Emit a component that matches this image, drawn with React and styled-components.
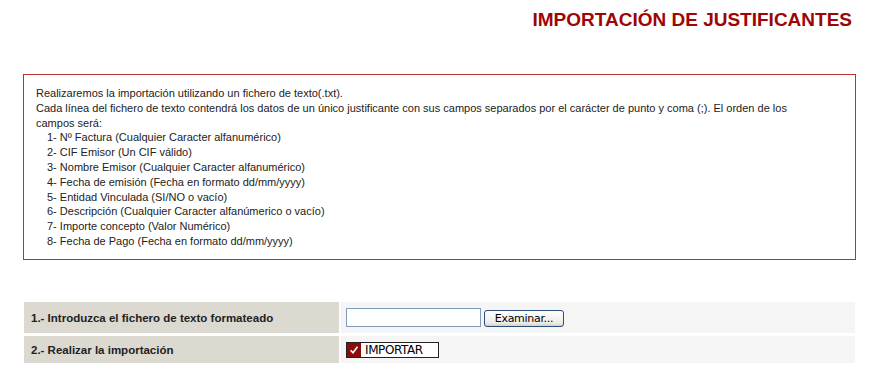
import styled, { createGlobalStyle } from "styled-components";

const GlobalStyle = createGlobalStyle`
  body {
    margin: 0;
    background: #ffffff;
    font-family: "Liberation Sans", Arial, sans-serif;
    color: #222222;
  }
`;

const Page = styled.div`
  width: 870px;
`;

const Title = styled.h1`
  margin: 0;
  padding: 9px 18px 0 0;
  text-align: right;
  font-size: 19px;
  line-height: 22px;
  font-weight: bold;
  color: #9e0505;
`;

const InfoBox = styled.div`
  box-sizing: border-box;
  height: 186px;
  margin: 43px 14px 0 23px;
  padding: 11px 12px 10px 12px;
  border: 1px solid #b83232;
  font-size: 11px;
  line-height: 14.8px;
  color: #222222;
`;

const Line = styled.div`
  max-width: 786px;
  padding-left: ${(p) => (p.$item ? "11px" : "0")};
`;

const Form = styled.div`
  margin: 42px 15px 0 24px;
  display: grid;
  grid-template-columns: 315px 1fr;
  row-gap: 3px;
  column-gap: 2px;
`;

const Label = styled.div`
  background: #dcd9d1;
  height: ${(p) => p.$h}px;
  display: flex;
  align-items: center;
  padding-left: 7px;
  font-size: 11.5px;
  font-weight: bold;
  color: #222222;
`;

const Value = styled.div`
  background: #f5f5f5;
  height: ${(p) => p.$h}px;
  display: flex;
  align-items: center;
  padding-left: 5px;
  gap: 3px;
`;

const FileInput = styled.div`
  width: 133px;
  height: 17px;
  border: 1px solid #7f9db9;
  background: #ffffff;
`;

const BrowseButton = styled.button`
  all: unset;
  box-sizing: border-box;
  width: 80px;
  height: 17px;
  margin-top: 2px;
  border: 1px solid #2c4e7a;
  border-radius: 3px;
  background: linear-gradient(#ffffff, #ecebe6 80%, #d6d0c5);
  font-family: Tahoma, "DejaVu Sans", sans-serif;
  font-size: 11px;
  letter-spacing: -0.3px;
  text-align: center;
  line-height: 15px;
  color: #000000;
`;

const ImportButton = styled.button`
  all: unset;
  box-sizing: border-box;
  display: flex;
  align-items: center;
  width: 93px;
  height: 16px;
  border: 1px solid #222222;
  background: #ffffff;
  font-family: "DejaVu Sans", Verdana, sans-serif;
  font-size: 12px;
  letter-spacing: -0.4px;
  color: #000000;
`;

const CheckBox = styled.span`
  display: flex;
  align-items: center;
  justify-content: center;
  width: 14px;
  height: 14px;
  margin-right: 4px;
  background: #8b0a0a;
`;

const items = [
  "1- Nº Factura (Cualquier Caracter alfanumérico)",
  "2- CIF Emisor (Un CIF válido)",
  "3- Nombre Emisor (Cualquier Caracter alfanumérico)",
  "4- Fecha de emisión (Fecha en formato dd/mm/yyyy)",
  "5- Entidad Vinculada (SI/NO o vacío)",
  "6- Descripción (Cualquier Caracter alfanúmerico o vacío)",
  "7- Importe concepto (Valor Numérico)",
  "8- Fecha de Pago (Fecha en formato dd/mm/yyyy)",
];

const App = () => {
  return (
    <Page>
      <GlobalStyle />
      <Title>IMPORTACIÓN DE JUSTIFICANTES</Title>
      <InfoBox>
        <Line>Realizaremos la importación utilizando un fichero de texto(.txt).</Line>
        <Line>
          Cada línea del fichero de texto contendrá los datos de un único
          justificante con sus campos separados por el carácter de punto y coma
          (;). El orden de los campos será:
        </Line>
        {items.map((t) => (
          <Line $item key={t}>
            {t}
          </Line>
        ))}
      </InfoBox>
      <Form>
        <Label $h={31}>1.- Introduzca el fichero de texto formateado</Label>
        <Value $h={31}>
          <FileInput />
          <BrowseButton>Examinar...</BrowseButton>
        </Value>
        <Label $h={27}>2.- Realizar la importación</Label>
        <Value $h={27}>
          <ImportButton>
            <CheckBox>
              <svg width="10" height="10" viewBox="0 0 10 10">
                <path
                  d="M1.6 5.3 L4 7.8 L8.5 1.8"
                  fill="none"
                  stroke="#ffffff"
                  strokeWidth="1.6"
                />
              </svg>
            </CheckBox>
            IMPORTAR
          </ImportButton>
        </Value>
      </Form>
    </Page>
  );
};

export default App;
